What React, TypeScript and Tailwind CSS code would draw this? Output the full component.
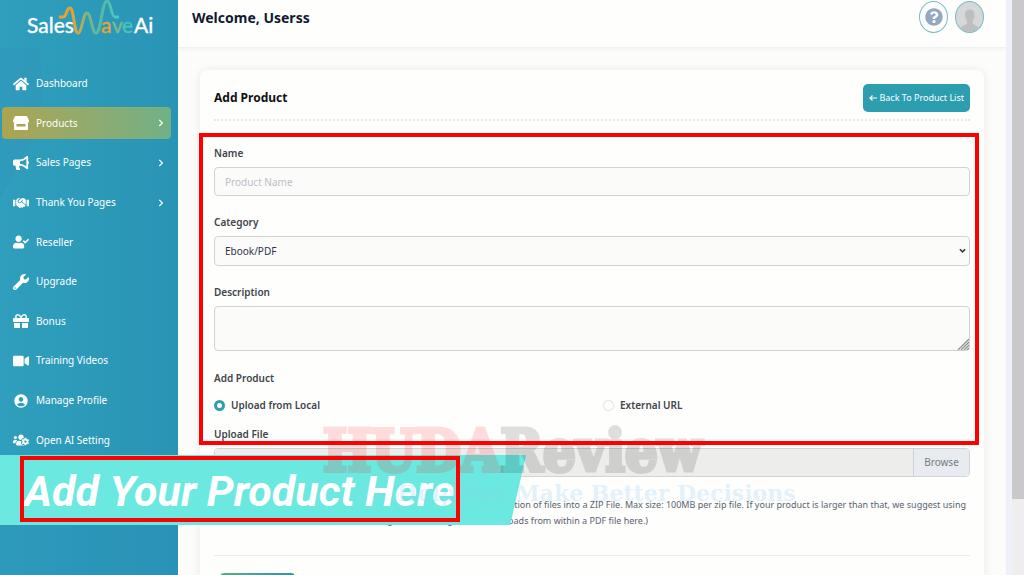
import React from "react";
import {
  FaBullhorn,
  FaChevronRight,
  FaGift,
  FaHandshake,
  FaHome,
  FaQuestionCircle,
  FaUserCheck,
  FaUsersCog,
  FaVideo,
  FaWrench,
} from "react-icons/fa";
import { MdAccountCircle } from "react-icons/md";

function StoreIcon({ className }: { className?: string }) {
  return (
    <svg viewBox="0 0 16 16" className={className} fill="currentColor" aria-hidden="true">
      <path d="M3 1h10q1 0 1.4.9L16 5.6Q16.2 8 14 8H2Q-.2 8 0 5.6L1.600 1.900Q2 1 3 1z" />
      <path fillRule="evenodd" d="M1 8h14v6q0 1-1 1H2q-1 0-1-1zM3.500 9v2.500h9V9z" />
    </svg>
  );
}

const navItems = [
  { label: "Dashboard", icon: FaHome },
  { label: "Products", icon: StoreIcon, active: true, more: true },
  { label: "Sales Pages", icon: FaBullhorn, more: true },
  { label: "Thank You Pages", icon: FaHandshake, more: true },
  { label: "Reseller", icon: FaUserCheck },
  { label: "Upgrade", icon: FaWrench },
  { label: "Bonus", icon: FaGift },
  { label: "Training Videos", icon: FaVideo },
  { label: "Manage Profile", icon: MdAccountCircle },
  { label: "Open AI Setting", icon: FaUsersCog },
];

function Logo() {
  return (
    <svg viewBox="0 0 130 40" className="h-10 w-[130px]" role="img" aria-label="SalesWave Ai">
      <defs>
        <linearGradient id="wave" x1="0" x2="1">
          <stop offset="0" stopColor="#f0a126" />
          <stop offset="0.28" stopColor="#d9a640" />
          <stop offset="0.5" stopColor="#74b58d" />
          <stop offset="0.75" stopColor="#55b9a8" />
          <stop offset="1" stopColor="#3fd0c4" />
        </linearGradient>
      </defs>
      <g fontFamily="Lato, sans-serif" fontSize="21" strokeWidth="0.400">
        <text x="2" y="33" fill="#fff" stroke="#fff">Sales</text>
        <text x="76" y="33" fill="#e6a336" stroke="#e6a336">a</text>
        <text x="87" y="33" fill="#7cb98a" stroke="#7cb98a">v</text>
        <text x="97" y="33" fill="#45c5bb" stroke="#45c5bb">e</text>
        <text x="109" y="33" fill="#fff" stroke="#fff">Ai</text>
      </g>
      <path
        d="M34 17h4c4 0 3-9 7-9 4 0 4 25 8 25s5-20 9-20 5 20 9 20c5 0 6-32 11-32 4 0 4 16 8 16h4"
        fill="none"
        stroke="url(#wave)"
        strokeWidth="3"
      />
    </svg>
  );
}

function Sidebar() {
  return (
    <aside className="relative w-[178px] shrink-0 overflow-hidden bg-linear-to-r from-[#2f9fbd] to-[#2a94b5] text-white">
      <svg
        className="absolute inset-0 h-full w-full"
        viewBox="0 0 178 575"
        preserveAspectRatio="none"
        aria-hidden="true"
      >
        <path d="M0 48h40l3 70L0 200z" fill="#3293bb" opacity="0.3" />
        <path d="M0 525h178v50H0z" fill="#2a8fb8" opacity="0.3" />
      </svg>
      <div className="relative flex flex-col">
        <a href="#home" className="flex h-16 items-start pl-[25px]">
          <Logo />
        </a>
        <nav className="grid h-[396px] auto-rows-fr items-center pr-[7px] pl-0.5">
          {navItems.map(({ label, icon: Icon, active, more }) => (
            <a
              key={label}
              href="#nav"
              className={
                active
                  ? "flex h-8 items-center gap-[7px] rounded-sm bg-linear-to-r from-[#aca44f] to-[#70b087] pr-1.5 pl-[11px] text-[10px]"
                  : "flex h-8 items-center gap-[7px] pr-1.5 pl-[11px] text-[10px]"
              }
            >
              <Icon className="h-4 w-4 shrink-0" />
              <span className="grow">{label}</span>
              {more && <FaChevronRight className="h-2 w-2 shrink-0" />}
            </a>
          ))}
        </nav>
      </div>
    </aside>
  );
}

const label = "block text-[10px] leading-4 font-semibold text-[#40444a]";
const field = "block w-full rounded-sm border border-[#d2d2d2] bg-[#fbfbfa] px-2.5 text-[10px]";

function ProductForm() {
  return (
    <form className="flex flex-col" onSubmit={(e) => e.preventDefault()}>
      <label htmlFor="name" className={`${label} mt-6 mb-1.5`}>Name</label>
      <input id="name" placeholder="Product Name" className={`${field} h-[29px] placeholder:text-[#bcc0c6]`} />

      <label htmlFor="category" className={`${label} mt-[18px] mb-1.5`}>Category</label>
      <div className="relative">
        <select id="category" className={`${field} h-[30px] appearance-none text-[#30334a]`}>
          <option>Ebook/PDF</option>
        </select>
        <svg viewBox="0 0 8 6" className="pointer-events-none absolute top-3 right-1 h-1.5 w-[7px]" fill="none" stroke="#33343f" strokeWidth="1.800">
          <path d="M1 1l3 3 3-3" />
        </svg>
      </div>

      <label htmlFor="description" className={`${label} mt-[18px] mb-1.5`}>Description</label>
      <div className="relative">
        <textarea id="description" className={`${field} h-[45px] resize-none`} />
        <svg viewBox="0 0 12 12" className="pointer-events-none absolute right-px bottom-px h-3 w-3" stroke="#8f8f8f" strokeWidth="1.300">
          <path d="M1 12L12 1M4 12l8-8M7 12l5-5M10 12l2-2" />
        </svg>
      </div>

      <fieldset>
        <legend className={`${label} pt-[19px]`}>Add Product</legend>
        <div className="mt-[11px] grid grid-cols-[389px_1fr]">
          <label className="flex items-center gap-1.5 text-[10px] leading-4 font-semibold text-[#40444a]">
            <input type="radio" name="source" defaultChecked className="h-[11px] w-[11px] appearance-none rounded-full border-3 border-[#2f9fad] bg-white" />
            Upload from Local
          </label>
          <label className="flex items-center gap-1.5 text-[10px] leading-4 font-semibold text-[#40444a]">
            <input type="radio" name="source" className="h-[11px] w-[11px] appearance-none rounded-full border border-[#e1e1e1] bg-white" />
            External URL
          </label>
        </div>
      </fieldset>

      <label htmlFor="file" className={`${label} mt-[13px] mb-1.5`}>Upload File</label>
      <div className="flex h-[29px] overflow-hidden rounded-sm border border-[#d3d3d3]">
        <input id="file" readOnly className="min-w-0 grow bg-[#ededec]" />
        <button type="button" className="w-14 border-l border-[#cdd1d8] bg-[#e8ebef] text-[10px] text-[#757b82]">Browse</button>
      </div>
      <p className="mt-5 pr-1 text-right text-[9px] leading-4 whitespace-nowrap text-[#59636e]">
        (Upload a PDF, or any combination of files into a ZIP File. Max size: 100MB per zip file. If your product is larger than that, we suggest using
      </p>
      <p className="w-[434px] text-right text-[9px] leading-4 whitespace-nowrap text-[#59636e]">
        external storage, then linking to the downloads from within a PDF file here.)
      </p>
      <hr className="mt-[26px] border-[#ececec]" />
      <button
        type="submit"
        aria-label="Submit"
        className="mt-[17px] ml-1.5 h-7 w-[75px] rounded-sm bg-linear-to-r from-[#5cad83] to-[#2b94ad]"
      />
    </form>
  );
}

export default function App() {
  return (
    <div className="relative flex h-screen overflow-hidden bg-[#fefefd] font-['Noto_Sans',sans-serif]">
      <Sidebar />
      <div className="flex min-w-0 grow flex-col bg-[#fcfcfb]">
        <header className="flex h-12 shrink-0 items-start justify-between border-b border-[#f1f1f1] bg-[#fefefd] pr-[22px] pl-3.5 shadow-[0_1px_4px_rgba(0,0,0,0.05)]">
          <h1 className="pt-1.5 text-[14px] leading-6 font-bold text-[#111a31]">Welcome, Userss</h1>
          <div className="flex gap-[7px] pt-px">
            <button aria-label="Help" className="flex h-8 w-[29px] items-center justify-center rounded-[50%] border border-[#75bdc4] text-[#93a9c3]">
              <FaQuestionCircle className="h-[18px] w-[18px]" />
            </button>
            <button aria-label="Account" className="h-8 w-[29px] overflow-hidden rounded-[50%] border border-[#75bdc4] bg-[#d5d7d9]">
              <svg viewBox="0 0 29 32" className="h-full w-full" fill="#bcbebf" aria-hidden="true">
                <path d="M14.500 8c-4 0-5 3-4.700 7 .2 3 1.400 4 2 5v3c-1 2-6 2-7 5v4h20v-4c-1-3-6-3-7-5v-3c.7-1 1.800-2 2-5 .3-4-1-7-5.300-7z" />
              </svg>
            </button>
          </div>
        </header>
        <main className="px-[22px] pt-[22px]">
          <section className="rounded-lg bg-[#fefefd] px-3.5 pt-3.5 shadow-[0_0_10px_rgba(0,0,0,0.07)]">
            <div className="flex h-[37px] items-start justify-between border-b-2 border-dotted border-[#e9e9e9]">
              <h2 className="pt-1 text-[12px] leading-5 font-bold text-[#101114]">Add Product</h2>
              <a href="#products" className="flex h-7 items-center gap-0.5 rounded-[5px] bg-[#2d9eb0] px-1.5 text-[9px] text-white">
                <svg viewBox="0 0 8 8" className="h-2 w-2" fill="none" stroke="currentColor" strokeWidth="1.200" aria-hidden="true">
                  <path d="M8 4H1M3.500 1.500L1 4l2.500 2.500" />
                </svg>
                Back To Product List
              </a>
            </div>
            <ProductForm />
          </section>
        </main>
      </div>
      <div className="w-1.5 shrink-0 bg-[#eff1f8]" />
      <div className="w-3 shrink-0 bg-[#eeeeee]">
        <div className="h-[499px] bg-[#c9c9c9]" />
      </div>

      <div className="absolute top-[455px] left-0 h-[70px] w-[526px] bg-[#6be8df] [clip-path:polygon(0_0,100%_0,97%_100%,0_100%)]" />
      <p className="absolute top-[458px] left-[20px] flex h-[66px] w-[440px] items-center pl-1 font-[Roboto] text-[43px] font-bold whitespace-nowrap text-white italic">
        Add Your Product Here
      </p>
      <p className="pointer-events-none absolute top-[416px] left-[323px] font-['DejaVu_Serif_Condensed','DejaVu_Serif',serif] text-[57px] leading-[70px] font-bold whitespace-nowrap">
        <span className="text-[#ff0000] opacity-13 [-webkit-text-stroke:4px_#ff0000]">HUDA</span>
        <span className="text-black opacity-12 [-webkit-text-stroke:4px_#000000]">Review</span>
      </p>
      <p className="pointer-events-none absolute top-[479px] left-[397px] font-['DejaVu_Serif',serif] text-[22px] leading-7 font-bold whitespace-nowrap text-[#8fcdf2]/25">
        Help You Make Better Decisions
      </p>
      <div className="pointer-events-none absolute top-[133px] left-[199px] h-[312px] w-[780px] border-4 border-[#ff0000]" />
      <div className="pointer-events-none absolute top-[456px] left-[20px] h-[66px] w-[440px] border-4 border-[#ff0000]" />
    </div>
  );
}
